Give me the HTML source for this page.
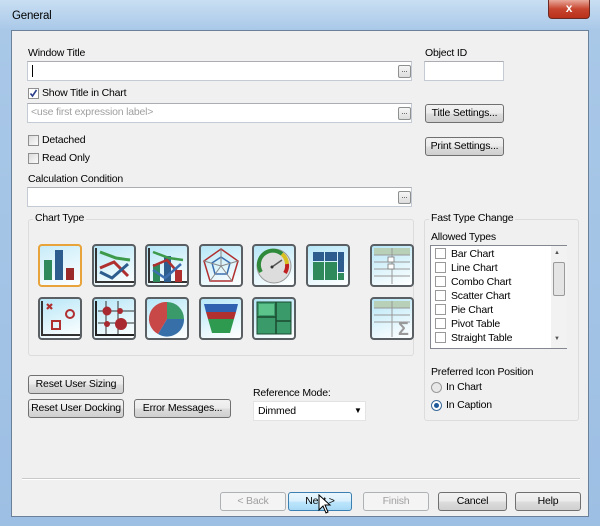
<!DOCTYPE html>
<html><head><style>
*{box-sizing:border-box;margin:0;padding:0}
body{width:600px;height:526px;overflow:hidden;font-family:"Liberation Sans",sans-serif;font-size:10.5px;letter-spacing:-0.2px;color:#000;background:#8fb4dc;position:relative;white-space:nowrap}
.a{position:absolute}
.frame{left:0;top:0;width:600px;height:526px;background:linear-gradient(180deg,#c9dff2 0,#a9c8e8 30px,#9dbfe3 100%)}
.panel{left:11px;top:30px;width:578px;height:487px;background:#f0f0f0;border:1px solid #6b8199}
.inp{background:#fff;border:1px solid #c4cbd4;border-top-color:#abadb3}
.dots{width:13px;height:13px;border:1px solid #8e8f8f;border-radius:2px;background:linear-gradient(#f6f6f6,#dcdcdc);font-size:8px;line-height:7px;text-align:center;color:#333}
.btn{border:1px solid #707070;border-radius:3px;background:linear-gradient(#f2f2f2 0,#ebebeb 50%,#dddddd 51%,#cfcfcf 100%);text-align:center;font-size:10.5px;line-height:17px}
.dis{border-color:#adb2b5;background:#f4f4f4;color:#a0a0a0}
.cb{width:11px;height:11px;border:1px solid #8f8f8f;background:linear-gradient(135deg,#dcdcdc,#fbfbfb)}
.grp{border:1px solid #dcdcdc;border-radius:3px}
.gl{background:#f0f0f0;padding:0 2px}
.ic{width:44px;height:43px;border:2px solid #5a5f63;border-radius:4px;background:linear-gradient(160deg,#b6e6f7 0,#e3f6fc 60%,#fff 100%);overflow:hidden}
.ic svg{position:absolute;left:0;top:0}
.li{position:absolute;left:4px;font-size:10.5px}
.li i{display:inline-block;width:11px;height:11px;border:1px solid #999;vertical-align:-2px;margin-right:5px}
</style></head><body>
<div class="a frame"></div>
<div class="a" style="left:12px;top:10px;font-size:11.5px">General</div>
<div class="a" style="left:548px;top:0;width:42px;height:19px;border:1px solid #6d2a22;border-top:none;border-radius:0 0 4px 4px;background:linear-gradient(#e9a99b,#c7452f 50%,#b8301a);color:#fff;font-weight:bold;font-size:12px;text-align:center;line-height:17px">x</div>
<div class="a panel"></div>

<div class="a" style="left:28px;top:47px">Window Title</div>
<div class="a inp" style="left:27px;top:61px;width:385px;height:20px"><div class="a" style="left:4px;top:3px;width:1px;height:12px;background:#000"></div></div>
<div class="a dots" style="left:398px;top:65px">...</div>
<div class="a" style="left:425px;top:47px">Object ID</div>
<div class="a inp" style="left:424px;top:61px;width:80px;height:20px"></div>

<div class="a cb" style="left:28px;top:88px;background:#fff;border-color:#8f8f8f"><svg width="9" height="9" class="a" style="left:0;top:0"><path d="M1.5 4.5 L3.5 7 L7.5 1" stroke="#2a3f8a" stroke-width="1.6" fill="none"/></svg></div>
<div class="a" style="left:42px;top:87px">Show Title in Chart</div>
<div class="a inp" style="left:27px;top:103px;width:385px;height:20px;color:#a0a0a0;padding:2px 3px">&lt;use first expression label&gt;</div>
<div class="a dots" style="left:398px;top:107px">...</div>
<div class="a btn" style="left:425px;top:104px;width:79px;height:19px">Title Settings...</div>

<div class="a cb" style="left:28px;top:135px"></div><div class="a" style="left:42px;top:134px">Detached</div>
<div class="a cb" style="left:28px;top:153px"></div><div class="a" style="left:42px;top:152px">Read Only</div>
<div class="a btn" style="left:425px;top:137px;width:79px;height:19px">Print Settings...</div>

<div class="a" style="left:28px;top:173px">Calculation Condition</div>
<div class="a inp" style="left:27px;top:187px;width:385px;height:20px"></div>
<div class="a dots" style="left:398px;top:191px">...</div>

<div class="a grp" style="left:28px;top:219px;width:386px;height:137px"></div>
<div class="a gl" style="left:33px;top:212px">Chart Type</div>

<div class="a ic" style="left:38px;top:244px;border-color:#e8a33a;background:linear-gradient(160deg,#c7ecf9,#fff)"><svg width="40" height="39"><rect x="4" y="14" width="8" height="20" fill="#2e8a5a"/><rect x="15" y="4" width="8" height="30" fill="#2d5d8e"/><rect x="26" y="22" width="8" height="12" fill="#9b2a2a"/></svg></div>
<div class="a ic" style="left:92px;top:244px"><svg width="40" height="39"><path d="M2 2V36H40" stroke="#333" stroke-width="2" fill="none"/><path d="M6 6L22 12L36 14" stroke="#3d9a4a" stroke-width="3" fill="none"/><path d="M6 22L20 16L34 30" stroke="#b03030" stroke-width="3" fill="none"/><path d="M6 26L18 32L34 18" stroke="#2d5d8e" stroke-width="3" fill="none"/></svg></div>
<div class="a ic" style="left:145px;top:244px"><svg width="40" height="39"><path d="M2 2V36H40" stroke="#333" stroke-width="2" fill="none"/><rect x="6" y="18" width="7" height="18" fill="#2e8a5a"/><rect x="17" y="10" width="7" height="26" fill="#2d5d8e"/><rect x="28" y="24" width="7" height="12" fill="#b03030"/><path d="M6 6L22 12L36 14" stroke="#3d9a4a" stroke-width="2.5" fill="none"/><path d="M6 20L20 14L34 30" stroke="#b03030" stroke-width="2.5" fill="none"/><path d="M6 24L18 32L34 18" stroke="#3d6fb0" stroke-width="2.5" fill="none"/></svg></div>
<div class="a ic" style="left:199px;top:244px"><svg width="40" height="39"><path d="M20 3L37 15L31 35H9L3 15Z" fill="none" stroke="#b03030" stroke-width="1.5"/><path d="M20 11L29 17L26 28H14L11 17Z" fill="none" stroke="#3d6fb0" stroke-width="1.5"/><path d="M20 3V20M37 15L20 20M31 35L20 20M9 35L20 20M3 15L20 20" stroke="#888" stroke-width="1"/></svg></div>
<div class="a ic" style="left:252px;top:244px"><svg width="40" height="39"><circle cx="20" cy="20" r="17" fill="#ddd" stroke="#999"/><path d="M7 26A14 14 0 0 1 28 8" stroke="#2e8a3a" stroke-width="4" fill="none"/><path d="M28 8A14 14 0 0 1 33 18" stroke="#d8c020" stroke-width="4" fill="none"/><path d="M33 18A14 14 0 0 1 31 27" stroke="#c02020" stroke-width="4" fill="none"/><path d="M18 21L28 14" stroke="#555" stroke-width="1.5"/><circle cx="18" cy="21" r="1.5" fill="#333"/></svg></div>
<div class="a ic" style="left:306px;top:244px"><svg width="40" height="39"><rect x="5" y="6" width="11" height="9" fill="#2d5d8e"/><rect x="17" y="6" width="12" height="9" fill="#2d5d8e"/><rect x="5" y="16" width="11" height="18" fill="#2e8a5a"/><rect x="17" y="16" width="12" height="18" fill="#2e8a5a"/><rect x="30" y="6" width="6" height="20" fill="#2d5d8e"/><rect x="30" y="27" width="6" height="7" fill="#2e8a5a"/></svg></div>
<div class="a ic" style="left:370px;top:244px"><svg width="40" height="39"><rect x="2" y="2" width="36" height="7" fill="#b8d0b8"/><path d="M2 9H38M2 16H38M2 23H38M2 30H38M20 2V38" stroke="#999" stroke-width="1"/><rect x="16" y="11" width="6" height="5" fill="#fff" stroke="#777" stroke-width=".8"/><rect x="16" y="18" width="6" height="5" fill="#fff" stroke="#777" stroke-width=".8"/></svg></div>
<div class="a ic" style="left:38px;top:297px"><svg width="40" height="39"><path d="M2 2V36H40" stroke="#333" stroke-width="2" fill="none"/><path d="M7 5L12 10M12 5L7 10" stroke="#b03030" stroke-width="2.2"/><circle cx="30" cy="15" r="4" fill="none" stroke="#b03030" stroke-width="2"/><rect x="12" y="22" width="8" height="8" fill="none" stroke="#b03030" stroke-width="2"/></svg></div>
<div class="a ic" style="left:92px;top:297px"><svg width="40" height="39"><path d="M4 12H40M4 24H40M12 2V36M24 2V36" stroke="#333" stroke-width="1" fill="none"/><path d="M2 2V36H40" stroke="#222" stroke-width="2" fill="none"/><circle cx="13" cy="12" r="4.5" fill="#a82a30"/><circle cx="26" cy="12" r="3" fill="#a82a30"/><circle cx="13" cy="25" r="3" fill="#a82a30"/><circle cx="27" cy="25" r="6" fill="#a82a30"/></svg></div>
<div class="a ic" style="left:145px;top:297px"><svg width="40" height="39"><path d="M20 20L20 3A17 17 0 0 1 37 20Z" fill="#3b9a6a"/><path d="M20 20L37 20A17 17 0 0 1 11 35Z" fill="#3770a8"/><path d="M20 20L11 35A17 17 0 0 1 20 3Z" fill="#c84848"/></svg></div>
<div class="a ic" style="left:199px;top:297px"><svg width="40" height="39"><path d="M3 5H37L35 13H5Z" fill="#3060b0"/><path d="M5 13H35L33 20H7Z" fill="#b03030"/><path d="M7 20H33L29 34H11Z" fill="#2e9a50"/></svg></div>
<div class="a ic" style="left:252px;top:297px"><svg width="40" height="39"><rect x="3" y="3" width="34" height="32" fill="#3a9a6a" stroke="#1a4a30"/><path d="M3 18H22M22 3V35M22 22H37" stroke="#1a4a30" stroke-width="1.5"/><rect x="5" y="5" width="15" height="11" fill="#5cc48a"/></svg></div>
<div class="a ic" style="left:370px;top:297px"><svg width="40" height="39"><rect x="2" y="2" width="36" height="7" fill="#b8d0b8"/><path d="M2 9H38M2 16H38M2 23H38M20 2V38" stroke="#999" stroke-width="1"/><text x="26" y="36" font-family="Liberation Sans" font-size="18" font-weight="bold" fill="#999">Σ</text></svg></div>

<div class="a grp" style="left:424px;top:219px;width:155px;height:202px"></div>
<div class="a gl" style="left:429px;top:212px">Fast Type Change</div>
<div class="a" style="left:431px;top:231px">Allowed Types</div>
<div class="a" style="left:430px;top:245px;width:137px;height:104px;background:#fff;border:1px solid #828790">
 <div class="li" style="top:2px"><i></i>Bar Chart</div>
 <div class="li" style="top:16px"><i></i>Line Chart</div>
 <div class="li" style="top:30px"><i></i>Combo Chart</div>
 <div class="li" style="top:44px"><i></i>Scatter Chart</div>
 <div class="li" style="top:58px"><i></i>Pie Chart</div>
 <div class="li" style="top:72px"><i></i>Pivot Table</div>
 <div class="li" style="top:86px"><i></i>Straight Table</div>
 <div class="a" style="left:120px;top:0;width:16px;height:102px;background:#f2f2f2"></div>
 <div class="a" style="left:123px;top:4px;font-size:6px;color:#555">▲</div>
 <div class="a" style="left:122px;top:16px;width:12px;height:34px;border:1px solid #999;border-radius:2px;background:#e4e4e4"></div>
 <div class="a" style="left:123px;top:90px;font-size:6px;color:#555">▼</div>
</div>
<div class="a" style="left:431px;top:366px">Preferred Icon Position</div>
<div class="a" style="left:431px;top:382px;width:11px;height:11px;border-radius:50%;border:1px solid #999;background:#e8e8e8"></div>
<div class="a" style="left:446px;top:381px">In Chart</div>
<div class="a" style="left:431px;top:400px;width:11px;height:11px;border-radius:50%;border:1px solid #3a6a9a;background:#fff"><div class="a" style="left:2px;top:2px;width:5px;height:5px;border-radius:50%;background:#1e5a9a"></div></div>
<div class="a" style="left:446px;top:399px">In Caption</div>

<div class="a btn" style="left:28px;top:375px;width:96px;height:19px">Reset User Sizing</div>
<div class="a btn" style="left:28px;top:399px;width:96px;height:19px">Reset User Docking</div>
<div class="a btn" style="left:134px;top:399px;width:97px;height:19px">Error Messages...</div>
<div class="a" style="left:253px;top:387px">Reference Mode:</div>
<div class="a" style="left:253px;top:401px;width:113px;height:20px;background:#fff;border:1px solid #e3e3e3;padding:3px 4px">Dimmed<span class="a" style="left:100px;top:4px;font-size:8px">▼</span></div>

<div class="a" style="left:22px;top:478px;width:558px;height:2px;border-top:1px solid #c9c9c9;border-bottom:1px solid #fff"></div>
<div class="a btn dis" style="left:220px;top:492px;width:66px;height:19px">&lt; Back</div>
<div class="a btn" style="left:288px;top:492px;width:64px;height:19px;border-color:#3c7fb1;background:linear-gradient(#eaf6fd,#d9f0fc 50%,#bee6fd 51%,#a7d9f5)">Next &gt;</div>
<div class="a btn dis" style="left:363px;top:492px;width:66px;height:19px">Finish</div>
<div class="a btn" style="left:438px;top:492px;width:69px;height:19px">Cancel</div>
<div class="a btn" style="left:515px;top:492px;width:66px;height:19px">Help</div>
<svg class="a" style="left:318px;top:494px" width="14" height="20"><path d="M1 1V16L5 12L8 19L10 18L7 11H12Z" fill="#fff" stroke="#000" stroke-width="1"/></svg>
</body></html>
